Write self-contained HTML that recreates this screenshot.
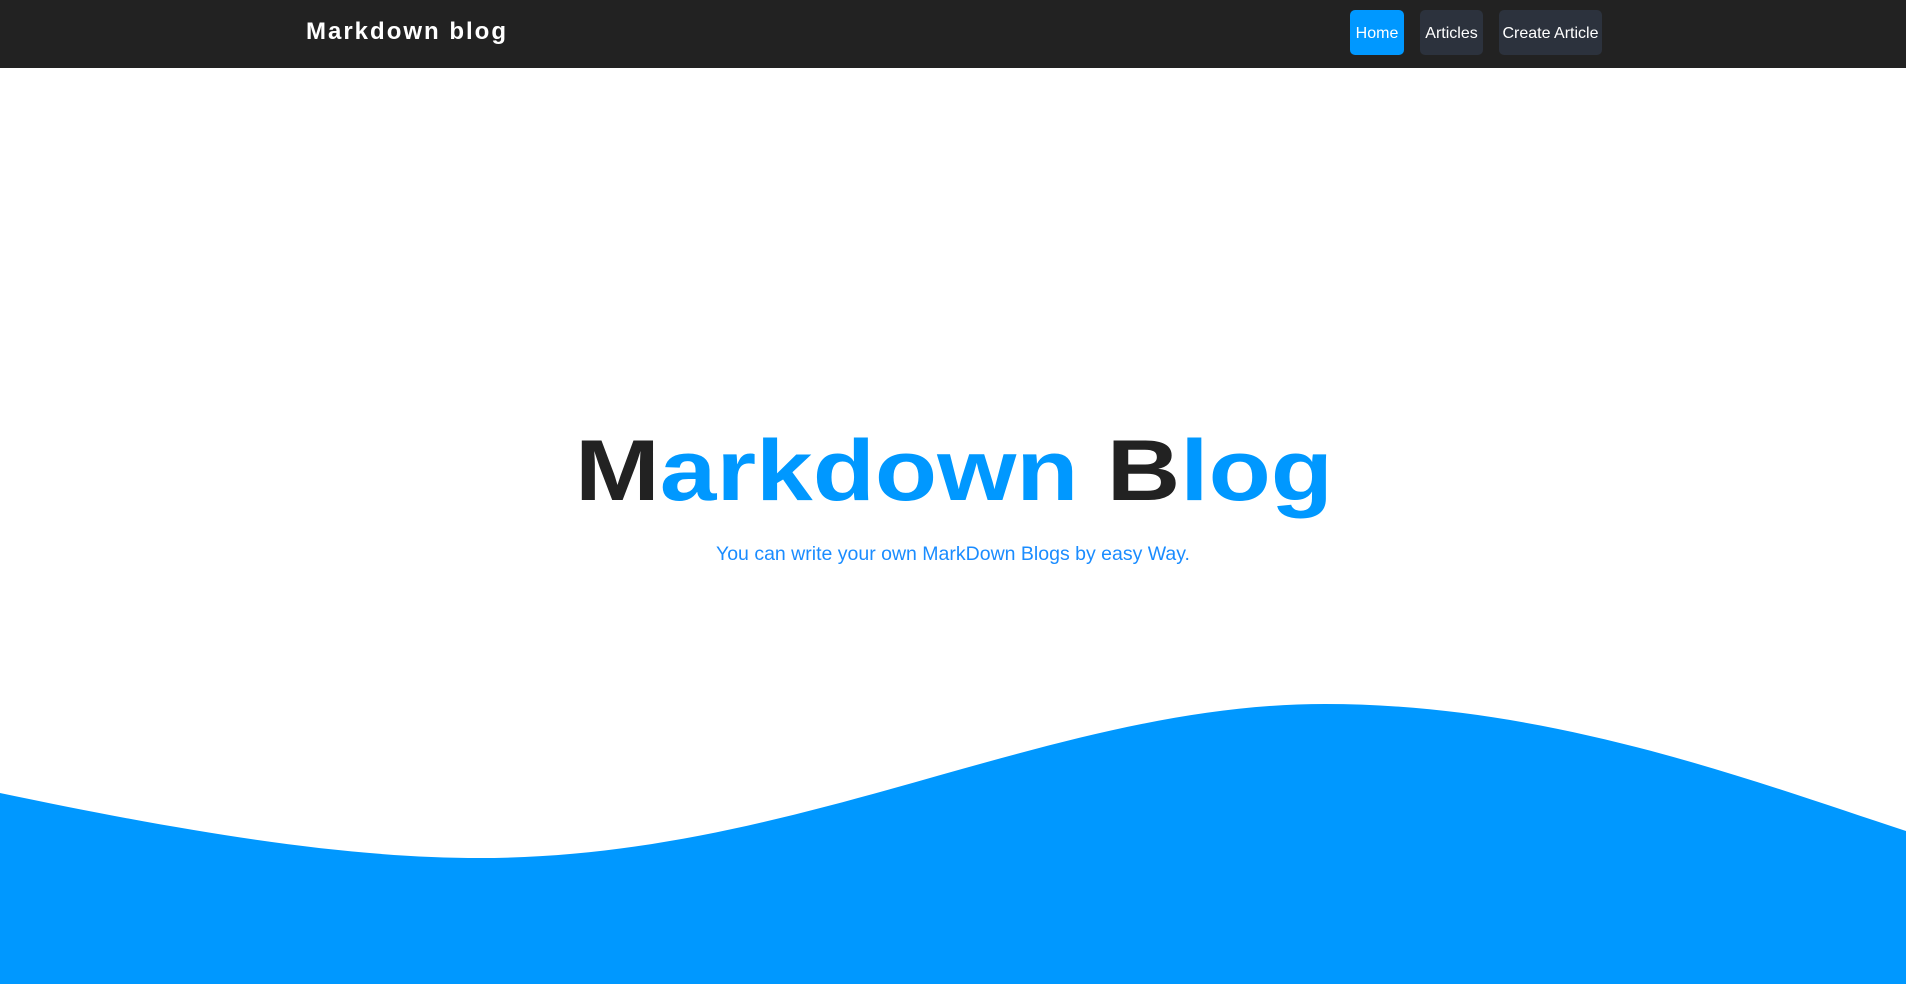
<!DOCTYPE html>
<html><head><meta charset="utf-8"><style>
html,body{margin:0;padding:0;width:1906px;height:984px;overflow:hidden;background:#fff;font-family:"Liberation Sans",sans-serif}
.nav{position:absolute;left:0;top:0;width:1906px;height:68px;background:#222}
.brand{position:absolute;left:306px;top:18px;color:#fff;font-weight:bold;font-size:24px;letter-spacing:2px}
.btn{position:absolute;top:10px;height:45px;line-height:47px;border-radius:5px;color:#fff;font-size:16px;text-align:center;background:#2c323d}
.sub{position:absolute;left:0;width:1906px;top:543px;text-align:center;color:#1a8cff;font-size:19.5px}
</style></head><body>
<div class="nav">
<div class="brand">Markdown blog</div>
<div class="btn" style="left:1350px;width:54px;background:#0098ff">Home</div>
<div class="btn" style="left:1420px;width:63px">Articles</div>
<div class="btn" style="left:1499px;width:103px">Create Article</div>
</div>
<svg style="position:absolute;left:0;top:0" width="1906" height="984">
<text x="575" y="500" textLength="758" lengthAdjust="spacingAndGlyphs" font-family="Liberation Sans" font-weight="bold" font-size="86"><tspan fill="#222">M</tspan><tspan fill="#0098ff">arkdown </tspan><tspan fill="#222">B</tspan><tspan fill="#0098ff">log</tspan></text>
<path d="M0,793 C200,835 350,858 480,858 C800,858 1050,704 1325,704 C1550,704 1750,780 1906,831 L1906,984 L0,984 Z" fill="#0098ff"/>
</svg>
<div class="sub">You can write your own MarkDown Blogs by easy Way.</div>
</body></html>
